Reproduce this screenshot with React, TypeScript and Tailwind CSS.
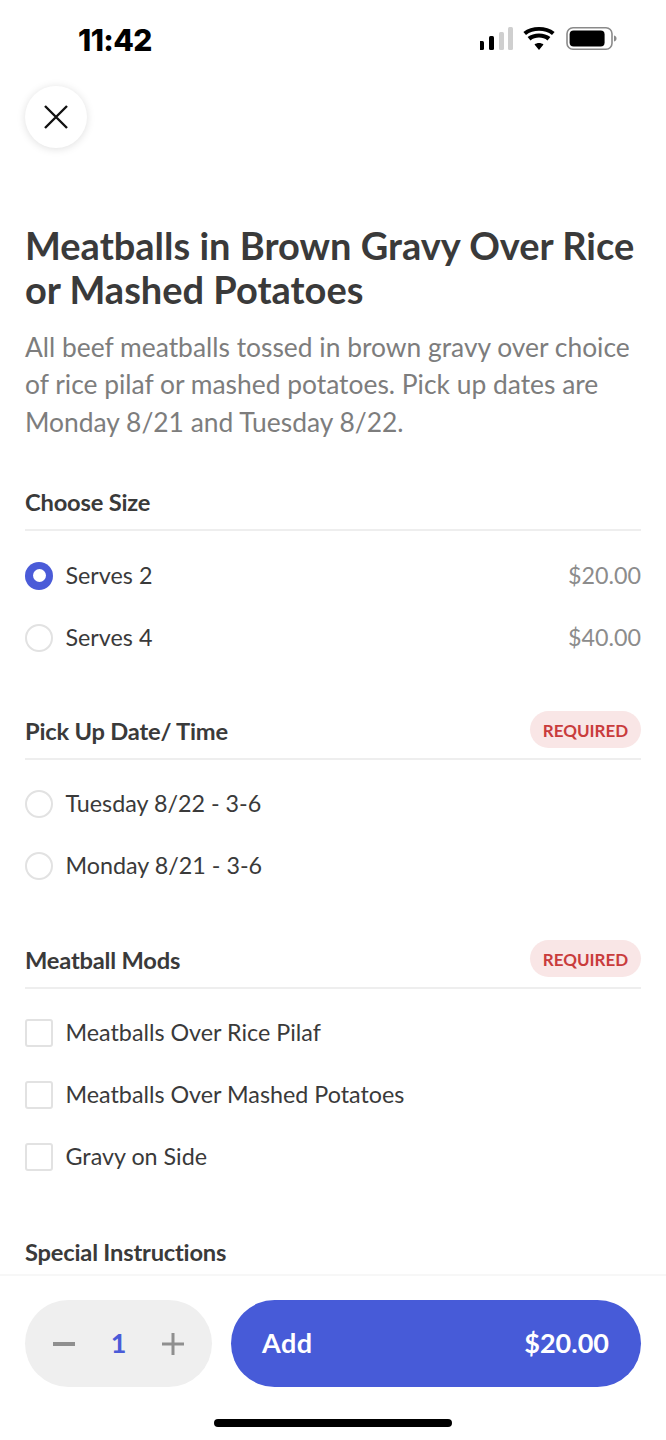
const font = "font-['Lato',sans-serif]";

function Radio({ checked }: { checked?: boolean }) {
  if (checked) {
    return (
      <span className="flex h-[28px] w-[28px] shrink-0 items-center justify-center rounded-full bg-[#4a5bd8]">
        <span className="h-[13px] w-[13px] rounded-full bg-white" />
      </span>
    );
  }
  return <span className="h-[28px] w-[28px] shrink-0 rounded-full border-2 border-[#e2e2e2] bg-white" />;
}

function Checkbox() {
  return <span className="h-[28px] w-[28px] shrink-0 rounded-[3px] border-2 border-[#e2e2e2] bg-white" />;
}

function Option({ control, label, price }: { control: React.ReactNode; label: string; price?: string }) {
  return (
    <div className="flex h-[62px] items-center">
      {control}
      <span className="ml-[12.5px] text-[23.3px] text-[#3a3a3a]">{label}</span>
      {price && <span className="ml-auto text-[23.3px] text-[#8c8c8c]">{price}</span>}
    </div>
  );
}

function SectionHeader({ title, required }: { title: string; required?: boolean }) {
  return (
    <div className="flex h-[52px] items-center justify-between border-b-2 border-[#eeeeee] pb-[2px]">
      <span className="text-[23.7px] font-bold tracking-[-0.2px] text-[#3a3a3a]">{title}</span>
      {required && (
        <span className="-mt-[4px] flex h-[37px] w-[111px] items-center justify-center rounded-full bg-[#f9e6e6] pt-[1px] text-[17px] font-bold text-[#c93c3c]">
          REQUIRED
        </span>
      )}
    </div>
  );
}

export default function App() {
  return (
    <div className={`${font} relative flex h-[1440px] w-[666px] flex-col overflow-hidden bg-white`}>
      {/* Status bar */}
      <div className="flex h-[86px] shrink-0 items-start justify-between pl-[78px] pr-[48px] pt-[22px]">
        <span className="font-['Inter',sans-serif] text-[30px] font-extrabold leading-[36px] tracking-[-0.6px] text-black">11:42</span>
        <svg width="138" height="24" viewBox="0 0 138 24" className="mt-[5px]">
          <rect x="-1" y="14" width="5" height="9" rx="1.5" fill="#000" />
          <rect x="9" y="9" width="5" height="14" rx="1.5" fill="#000" />
          <rect x="19" y="5" width="5" height="18" rx="1.5" fill="#cfcfcf" />
          <rect x="28" y="0" width="5" height="23" rx="1.5" fill="#cfcfcf" />
          <path
            d="M59 23 L54.5 17.6 C57 15.6 61 15.6 63.5 17.6 Z M50.5 13.4 L47.6 10 C53.5 5.2 64.5 5.2 70.4 10 L67.5 13.4 C62.8 9.6 55.2 9.6 50.5 13.4 Z M46 8 L43.4 5 C51.5 -1.6 66.5 -1.6 74.6 5 L72 8 C65 2.4 53 2.4 46 8 Z"
            fill="#000"
          />
          <rect x="87" y="0.8" width="45" height="21.4" rx="6" fill="none" stroke="#8a8a8a" strokeWidth="1.6" />
          <rect x="89.6" y="3.4" width="35" height="16.2" rx="4" fill="#000" />
          <path d="M134 8.5 C136 9 136.5 10.2 136.5 11.5 C136.5 12.8 136 14 134 14.5 Z" fill="#8a8a8a" />
        </svg>
      </div>

      {/* Close */}
      <div className="px-[25px]">
        <button className="flex h-[62px] w-[62px] items-center justify-center rounded-full bg-white shadow-[0_1px_9px_rgba(0,0,0,0.13)]">
          <svg width="26" height="26" viewBox="0 0 26 26" fill="none" stroke="#111" strokeWidth="2.4">
            <path d="M2 2 L24 24 M24 2 L2 24" />
          </svg>
        </button>
      </div>

      {/* Scrollable content */}
      <div className="flex-1 overflow-hidden px-[25px]">
        <h1 className="mt-[75px] text-[38px] font-bold leading-[44px] text-[#3a3a3a]">
          Meatballs in Brown Gravy Over Rice or Mashed Potatoes
        </h1>
        <p className="mt-[18px] text-[26.4px] leading-[37.3px] text-[#7d7d7d]">
          All beef meatballs tossed in brown gravy over choice of rice pilaf or mashed potatoes. Pick up dates are Monday 8/21 and Tuesday 8/22.
        </p>

        <div className="mt-[38px]">
          <SectionHeader title="Choose Size" />
          <div className="pt-[14px]">
            <Option control={<Radio checked />} label="Serves 2" price="$20.00" />
            <Option control={<Radio />} label="Serves 4" price="$40.00" />
          </div>
        </div>

        <div className="mt-[39px]">
          <SectionHeader title="Pick Up Date/ Time" required />
          <div className="pt-[13px]">
            <Option control={<Radio />} label="Tuesday 8/22 - 3-6" />
            <Option control={<Radio />} label="Monday 8/21 - 3-6" />
          </div>
        </div>

        <div className="mt-[40px]">
          <SectionHeader title="Meatball Mods" required />
          <div className="pt-[13px]">
            <Option control={<Checkbox />} label="Meatballs Over Rice Pilaf" />
            <Option control={<Checkbox />} label="Meatballs Over Mashed Potatoes" />
            <Option control={<Checkbox />} label="Gravy on Side" />
          </div>
        </div>

        <div className="mt-[41px]">
          <SectionHeader title="Special Instructions" />
        </div>
      </div>

      {/* Bottom bar */}
      <div className="h-[166px] shrink-0 border-t-2 border-[#f7f7f7] bg-white px-[25px] pt-[24px]">
        <div className="flex gap-[19px]">
          <div className="flex h-[87px] w-[187px] items-center justify-between rounded-full bg-[#efefef] px-[28px]">
            <span className="h-[4px] w-[22px] bg-[#8f8f8f]" />
            <span className="text-[27px] font-bold text-[#4a5bd8]">1</span>
            <svg width="22" height="22" viewBox="0 0 22 22" fill="#8f8f8f">
              <rect x="0" y="9.5" width="22" height="3" />
              <rect x="9.5" y="0" width="3" height="22" />
            </svg>
          </div>
          <button className="flex h-[87px] flex-1 items-center justify-between rounded-full bg-[#475bd8] pl-[31px] pr-[32px] text-[27px] font-bold text-white">
            <span className="tracking-[0.5px]">Add</span>
            <span>$20.00</span>
          </button>
        </div>
        <div className="mx-auto mt-[32px] h-[8px] w-[238px] rounded-full bg-black" />
      </div>
    </div>
  );
}
